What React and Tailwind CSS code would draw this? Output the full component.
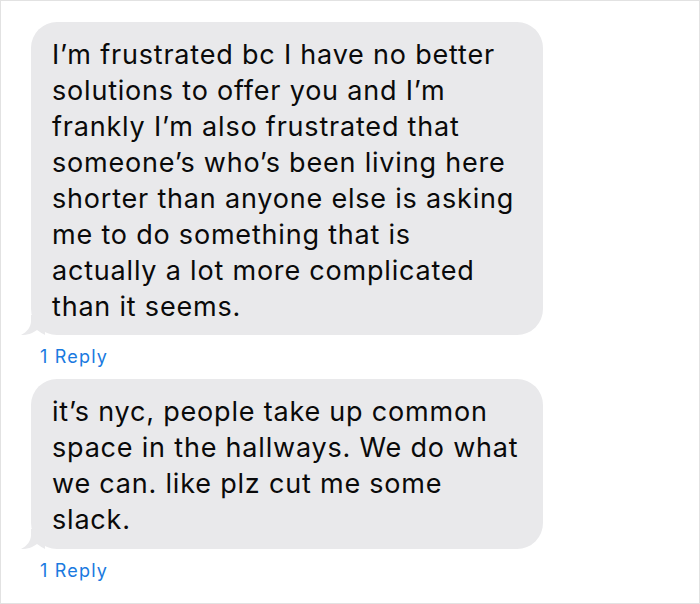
import React from "react";

function Tail() {
  return (
    <svg
      className="absolute left-[-10px] bottom-0"
      width="24"
      height="20"
      viewBox="0 0 24 20"
    >
      <path
        d="M10 0 L10 6 C10 12 6 17 0 20 C7 20 12 18 16 15 C19 17 22 19 24 20 L24 0 Z"
        fill="#e9e9eb"
      />
    </svg>
  );
}

function Bubble({ lines, className }) {
  return (
    <div
      className={
        "relative ml-[30px] w-[512px] rounded-[26px] bg-[#e9e9eb] pl-[21px] text-[27px] leading-[36px] tracking-[0.8px] text-[#0a0a0a] " +
        className
      }
    >
      {lines.map((l, i) => (
        <div key={i} className="whitespace-nowrap">
          {l}
        </div>
      ))}
      <Tail />
    </div>
  );
}

export default function App() {
  return (
    <div
      className="h-[604px] w-[700px] overflow-hidden border border-[#e2e2e2] bg-white"
      style={{ fontFamily: "Inter, 'Noto Sans', sans-serif" }}
    >
      <div className="pt-[21px]">
        <Bubble
          className="pt-[15px] pb-[10px]"
          lines={[
            "I’m frustrated bc I have no better",
            "solutions to offer you and I’m",
            "frankly I’m also frustrated that",
            "someone’s who’s been living here",
            "shorter than anyone else is asking",
            "me to do something that is",
            "actually a lot more complicated",
            "than it seems.",
          ]}
        />
        <div className="ml-[39px] mt-[12px] text-[18px] leading-[20px] tracking-[1.2px] text-[#1a7ae0]">
          1 Reply
        </div>
        <Bubble
          className="mt-[12px] pt-[15px] pb-[11px]"
          lines={[
            "it’s nyc, people take up common",
            "space in the hallways. We do what",
            "we can. like plz cut me some",
            "slack.",
          ]}
        />
        <div className="ml-[39px] mt-[12px] text-[18px] leading-[20px] tracking-[1.2px] text-[#1a7ae0]">
          1 Reply
        </div>
      </div>
    </div>
  );
}
